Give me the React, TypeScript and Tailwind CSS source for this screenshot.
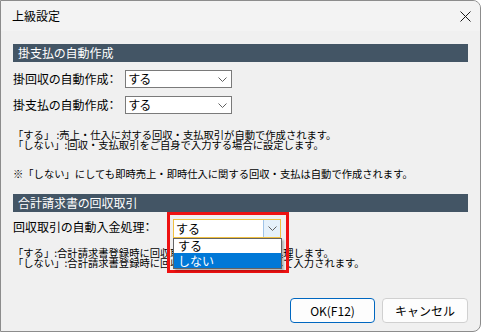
import React from 'react';

const jp = "font-['Noto_Sans_CJK_JP','Noto_Sans',sans-serif]";

const Chevron: React.FC = () => (
  <svg width="9" height="5" viewBox="0 0 9 5">
    <path d="M0.5 0.5 L4.5 4.5 L8.5 0.5" fill="none" stroke="#606060" strokeWidth="1" />
  </svg>
);

const Select: React.FC<{ value: string }> = ({ value }) => (
  <div className="flex h-[18px] w-[107px] items-center justify-between border border-[#7a7a7a] bg-white pl-[3px] pr-[4px]">
    <span className="text-[12px] leading-none text-black">{value}</span>
    <Chevron />
  </div>
);

const SectionHeader: React.FC<{ title: string }> = ({ title }) => (
  <div className="flex h-[18px] items-center bg-[#435565] px-[5px] text-[12px] text-white [font-feature-settings:'palt']">{title}</div>
);

const Line: React.FC<{ children: React.ReactNode }> = ({ children }) => (
  <div className="h-[10px] whitespace-nowrap text-[10.3px] leading-[10px]">{children}</div>
);

const App: React.FC = () => {
  return (
    <div className={`h-[333px] w-[482px] bg-white ${jp}`}>
      <div className="flex h-[332px] w-[481px] flex-col overflow-hidden rounded-r-[8px] border border-[#8c8c8c] bg-[#f0f0f0] text-black">
        {/* title bar */}
        <div className="flex h-[30px] shrink-0 items-center justify-between bg-[#f3f3f3] pl-[11px] pr-[9px]">
          <span className="text-[12px]">上級設定</span>
          <svg width="11" height="11" viewBox="0 0 11 11">
            <path d="M0.5 0.5 L10.5 10.5 M10.5 0.5 L0.5 10.5" stroke="#1a1a1a" strokeWidth="1" />
          </svg>
        </div>

        <div className="flex flex-col px-[12px] text-[12px]">
          <div className="mt-[13px]">
            <SectionHeader title="掛支払の自動作成" />
          </div>

          <div className="mt-[8px] flex flex-col gap-[8px] [font-feature-settings:'palt']">
            <div className="flex items-center">
              <span className="w-[112px]">掛回収の自動作成：</span>
              <Select value="する" />
            </div>
            <div className="flex items-center">
              <span className="w-[112px]">掛支払の自動作成：</span>
              <Select value="する" />
            </div>
          </div>

          <div className="mt-[16px] flex flex-col">
            <Line>「する」 :売上・仕入に対する回収・支払取引が自動で作成されます。</Line>
            <Line>「しない」:回収・支払取引をご自身で入力する場合に設定します。</Line>
          </div>
          <div className="mt-[19px]">
            <Line>※「しない」にしても即時売上・即時仕入に関する回収・支払は自動で作成されます。</Line>
          </div>

          <div className="mt-[15px]">
            <SectionHeader title="合計請求書の回収取引" />
          </div>

          <div className="flex items-start">
            <span className="mt-[6px] w-[154px] [font-feature-settings:'palt']">回収取引の自動入金処理：</span>
            {/* highlighted dropdown, open */}
            <div className="relative z-10 h-[61px] w-[122px] border-[3px] border-[#ee1111] pl-[3px] pt-[4px]">
              <div className="flex h-[19px] w-[108px] border border-[#f0c040] bg-white">
                <span className="flex flex-1 items-center pl-[2px] text-[12px] leading-none">する</span>
                <div className="flex w-[17px] items-center justify-center border-l border-[#a0c4e8] bg-[#e5f1fb]">
                  <Chevron />
                </div>
              </div>
              <div className="w-[109px] border border-[#646464] bg-white shadow-[2px_2px_2px_rgba(0,0,0,0.25)]">
                <div className="flex h-[14px] items-center pl-[4px] text-[12px] leading-none">する</div>
                <div className="flex h-[15px] items-center bg-[#0078d7] pl-[4px] text-[12px] leading-none text-white">しない</div>
              </div>
            </div>
          </div>

          <div className="-mt-[25px] flex flex-col">
            <Line>「する」:合計請求書登録時に回収取引を自動で作成して処理します。</Line>
            <Line>「しない」:合計請求書登録時に回収取引の入金額を確認して入力されます。</Line>
          </div>

          <div className="mt-[30px] flex justify-end gap-[7px]">
            <button className="h-[25px] w-[85px] rounded-[4px] border border-[#0067c0] bg-[#fdfdfd] text-[12px]">OK(F12)</button>
            <button className="h-[25px] w-[86px] rounded-[4px] border border-[#d0d0d0] bg-[#fdfdfd] text-[12px]">キャンセル</button>
          </div>
        </div>
      </div>
    </div>
  );
};

export default App;
